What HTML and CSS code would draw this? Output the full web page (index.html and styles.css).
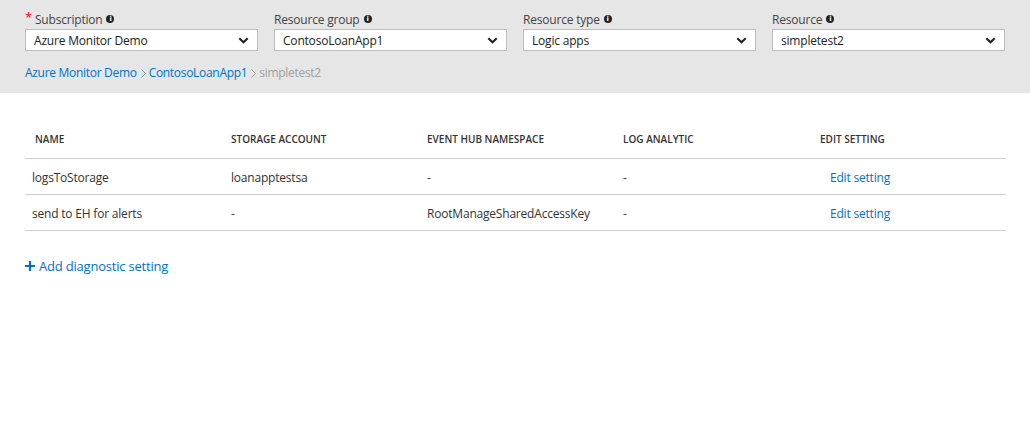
FILE: index.html
```html
<!DOCTYPE html>
<html>
<head>
<meta charset="utf-8">
<link rel="stylesheet" href="styles.css">
</head>
<body>
<div class="header">
  <div class="fields">
    <div class="field">
      <div class="label"><span class="req">*</span> Subscription <span class="info">i</span></div>
      <div class="select"><span>Azure Monitor Demo</span><svg class="chev" viewBox="0 0 12 8" width="11" height="7"><path d="M1.2 1.5 L6 6 L10.8 1.5" fill="none" stroke="#222" stroke-width="2.4"/></svg></div>
    </div>
    <div class="field">
      <div class="label">Resource group <span class="info">i</span></div>
      <div class="select"><span>ContosoLoanApp1</span><svg class="chev" viewBox="0 0 12 8" width="11" height="7"><path d="M1.2 1.5 L6 6 L10.8 1.5" fill="none" stroke="#222" stroke-width="2.4"/></svg></div>
    </div>
    <div class="field">
      <div class="label">Resource type <span class="info">i</span></div>
      <div class="select"><span>Logic apps</span><svg class="chev" viewBox="0 0 12 8" width="11" height="7"><path d="M1.2 1.5 L6 6 L10.8 1.5" fill="none" stroke="#222" stroke-width="2.4"/></svg></div>
    </div>
    <div class="field">
      <div class="label">Resource <span class="info">i</span></div>
      <div class="select"><span>simpletest2</span><svg class="chev" viewBox="0 0 12 8" width="11" height="7"><path d="M1.2 1.5 L6 6 L10.8 1.5" fill="none" stroke="#222" stroke-width="2.4"/></svg></div>
    </div>
  </div>
  <div class="crumbs">
    <a class="link">Azure Monitor Demo</a><svg class="sep" viewBox="0 0 5 9" width="5" height="9"><path d="M0.5 0.5 L4.5 4.5 L0.5 8.5" fill="none" stroke="#999" stroke-width="1"/></svg><a class="link">ContosoLoanApp1</a><svg class="sep" viewBox="0 0 5 9" width="5" height="9"><path d="M0.5 0.5 L4.5 4.5 L0.5 8.5" fill="none" stroke="#999" stroke-width="1"/></svg><span class="cur">simpletest2</span>
  </div>
</div>
<div class="content">
  <div class="table">
    <div class="row head">
      <div class="cell">NAME</div>
      <div class="cell">STORAGE ACCOUNT</div>
      <div class="cell">EVENT HUB NAMESPACE</div>
      <div class="cell">LOG ANALYTIC</div>
      <div class="cell">EDIT SETTING</div>
    </div>
    <div class="row">
      <div class="cell first">logsToStorage</div>
      <div class="cell">loanapptestsa</div>
      <div class="cell">-</div>
      <div class="cell">-</div>
      <div class="cell edit"><a class="link">Edit setting</a></div>
    </div>
    <div class="row">
      <div class="cell first">send to EH for alerts</div>
      <div class="cell">-</div>
      <div class="cell">RootManageSharedAccessKey</div>
      <div class="cell">-</div>
      <div class="cell edit"><a class="link">Edit setting</a></div>
    </div>
  </div>
  <div class="add"><svg viewBox="0 0 10 10" width="10" height="10"><path d="M5 0 V10 M0 5 H10" stroke="#0072c6" stroke-width="2.2"/></svg><a class="link">Add diagnostic setting</a></div>
</div>
</body>
</html>
```
FILE: styles.css
```css
html, body {
  margin: 0;
  padding: 0;
  background: #fff;
  font-family: "Segoe UI", "Open Sans", "Noto Sans", sans-serif;
  color: #333;
}
.header {
  background: #e6e6e6;
  height: 93px;
  box-sizing: border-box;
  padding: 9px 24px 0 25px;
}
.fields {
  display: grid;
  grid-template-columns: repeat(4, 233px);
  column-gap: 16px;
}
.label {
  font-size: 12px;
  color: #444;
  height: 20px;
  line-height: 17px;
  display: flex;
  align-items: center;
  gap: 4px;
  letter-spacing: -0.2px;
}
.req {
  color: #e00;
  font-size: 13px;
  margin-right: -1px;
  position: relative;
  top: -2px;
}
.info {
  display: inline-flex;
  width: 8px;
  height: 8px;
  border-radius: 50%;
  background: #222;
  color: #fff;
  font-size: 7px;
  font-weight: bold;
  align-items: center;
  justify-content: center;
  line-height: 8px;
  font-family: "DejaVu Sans", sans-serif;
}
.select {
  height: 22px;
  box-sizing: border-box;
  border: 1px solid #bdbdbd;
  background: #fff;
  display: flex;
  align-items: center;
  justify-content: space-between;
  padding: 0 8px 0 8px;
  font-size: 12px;
  color: #222;
  letter-spacing: -0.2px;
}
.chev { display: block; }
.crumbs {
  margin-top: 13px;
  font-size: 12px;
  display: flex;
  align-items: center;
  letter-spacing: -0.3px;
}
.link { color: #0072c6; text-decoration: none; }
.sep { display: block; margin: 1px 3px 0 4px; }
.cur { color: #a0a0a0; }
.content {
  padding: 30px 24px 0 25px;
}
.table {
  width: 981px;
}
.row {
  display: grid;
  grid-template-columns: 196px 196px 196px 197px 196px;
  height: 36px;
  box-sizing: border-box;
  padding-top: 2px;
  align-items: center;
  border-bottom: 1px solid #cfcfcf;
  font-size: 12px;
  color: #333;
  letter-spacing: -0.2px;
}
.row.head {
  height: 36px;
  padding-top: 0;
  padding-bottom: 4px;
  font-size: 10px;
  font-weight: 600;
  color: #333;
  letter-spacing: 0;
}
.cell { padding-left: 10px; white-space: nowrap; }
.cell.first { padding-left: 7px; }
.cell.edit { padding-left: 20px; }
.add {
  margin-top: 26px;
  display: flex;
  align-items: center;
  gap: 4px;
  font-size: 13px;
  letter-spacing: -0.2px;
}
.add svg { display: block; }
```
